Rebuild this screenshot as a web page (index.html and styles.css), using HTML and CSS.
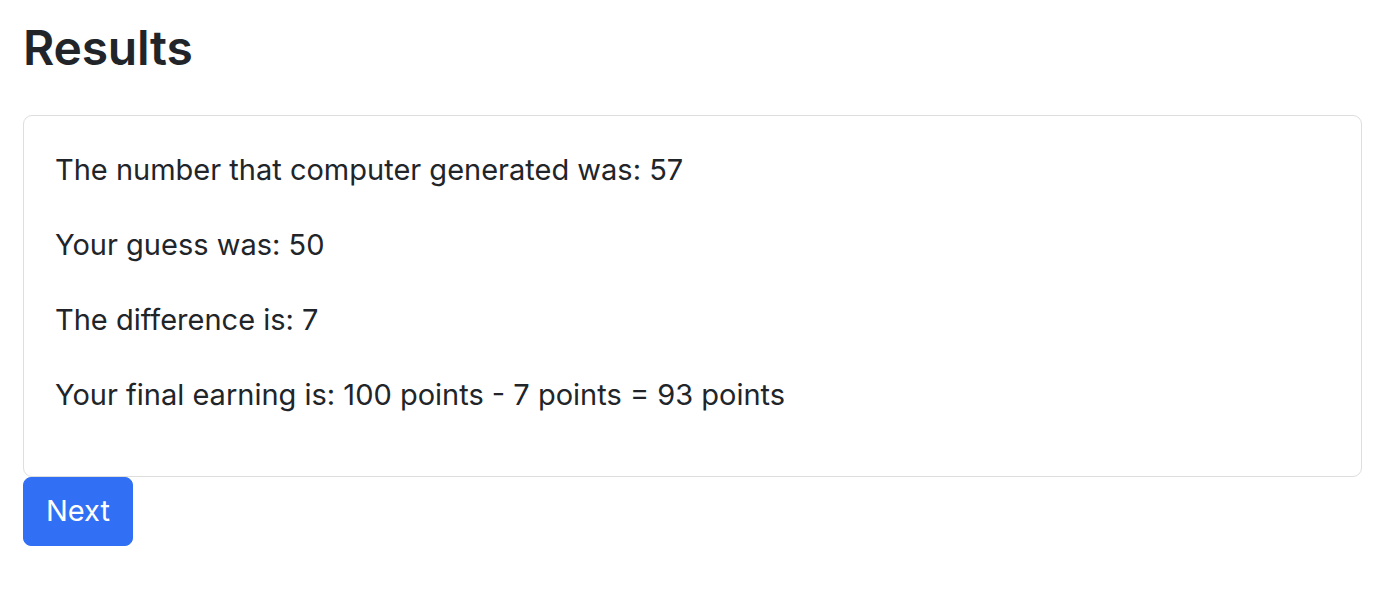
FILE: index.html
```html
<!DOCTYPE html>
<html lang="en">
<head>
<meta charset="utf-8">
<title>Results</title>
<link rel="stylesheet" href="styles.css">
</head>
<body>
<div class="page">
  <h1 class="title">Results</h1>
  <div class="card">
    <p>The number that computer generated was: 57</p>
    <p>Your guess was: 50</p>
    <p>The difference is: 7</p>
    <p>Your final earning is: 100 points - 7 points = 93 points</p>
  </div>
  <div class="actions">
    <button class="btn-primary" type="button">Next</button>
  </div>
</div>
</body>
</html>
```
FILE: styles.css
```css
html, body {
  margin: 0;
  padding: 0;
  background: #ffffff;
}
body {
  font-family: Inter, "Liberation Sans", sans-serif;
  color: #212529;
  font-size: 29px;
}
.page {
  padding: 19px 12px 0 23px;
  display: flex;
  flex-direction: column;
}
.title {
  margin: 0 0 38px;
  font-size: 48px;
  font-weight: 600;
  line-height: 1.2;
  letter-spacing: -0.2px;
}
.card {
  border: 1px solid #dedede;
  border-radius: 9px;
  padding: 34px 32px 26px 31px;
}
.card p {
  margin: 0 0 35px;
  line-height: 40px;
}
.actions {
  display: flex;
}
.btn-primary {
  font-family: inherit;
  font-size: 29px;
  line-height: 40px;
  color: #ffffff;
  background: #3170f5;
  border: 1px solid #3170f5;
  border-radius: 8px;
  padding: 13.5px 22px;
  cursor: pointer;
}
```
